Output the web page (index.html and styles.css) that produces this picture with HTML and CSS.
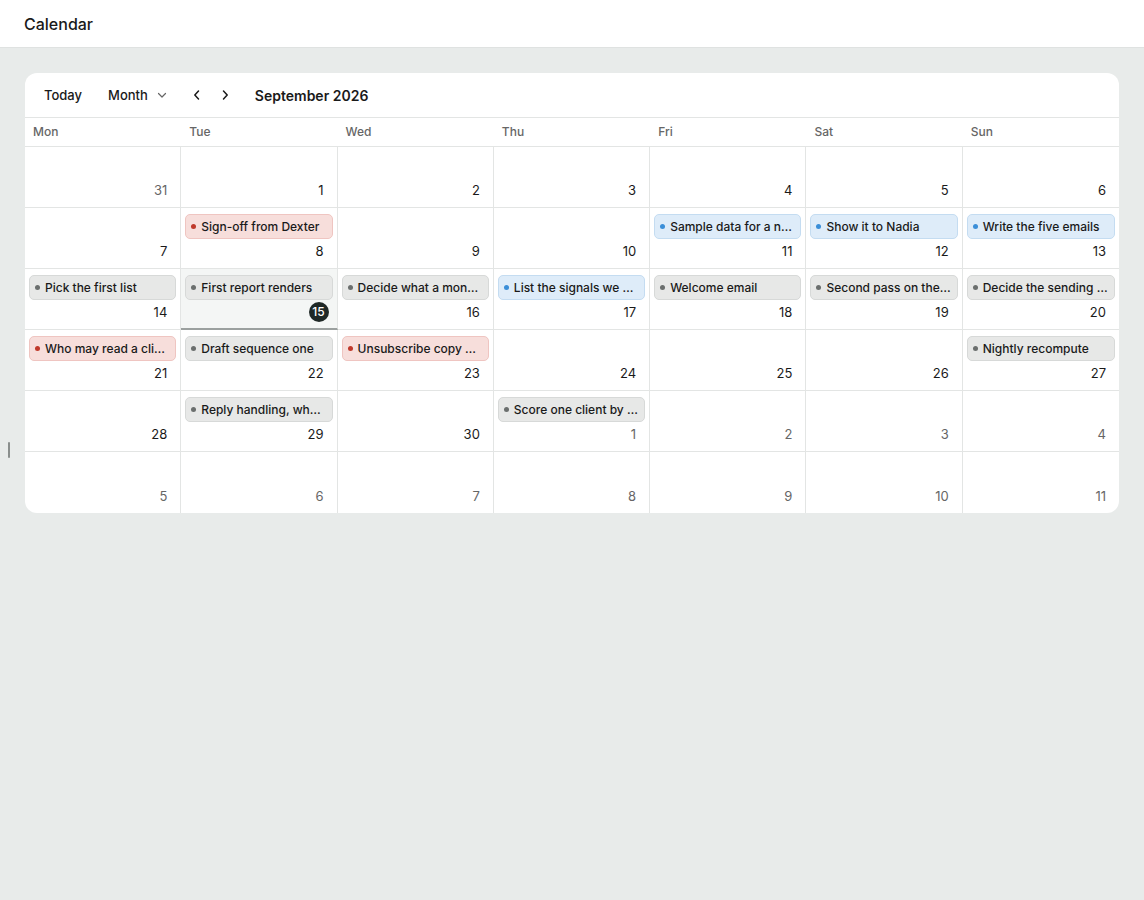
FILE: index.html
```html
<!DOCTYPE html>
<html lang="en">
<head>
    <meta charset="UTF-8">
    <meta name="viewport" content="width=device-width, initial-scale=1.0">
    <title>Calendar</title>
    <link rel="stylesheet" href="styles.css">
</head>
<body>
    <!-- Top bar -->
    <header class="topbar">Calendar</header>

    <main class="page">
        <div class="resize-handle"></div>

        <!-- Month view -->
        <section class="calendar">
            <div class="toolbar">
                <button class="tool-btn">Today</button>
                <button class="tool-btn view-btn">Month
                    <svg width="12" height="12" viewBox="0 0 12 12"><path d="M2.5 4.5 6 8l3.5-3.5" fill="none" stroke="#666" stroke-width="1.2" stroke-linecap="round" stroke-linejoin="round"/></svg>
                </button>
                <div class="nav">
                    <button class="nav-btn">
                        <svg width="14" height="14" viewBox="0 0 14 14"><path d="M8.5 3 4.8 7l3.7 4" fill="none" stroke="#1a1a1a" stroke-width="1.5" stroke-linecap="round" stroke-linejoin="round"/></svg>
                    </button>
                    <button class="nav-btn">
                        <svg width="14" height="14" viewBox="0 0 14 14"><path d="M5.5 3 9.2 7l-3.7 4" fill="none" stroke="#1a1a1a" stroke-width="1.5" stroke-linecap="round" stroke-linejoin="round"/></svg>
                    </button>
                </div>
                <div class="month-title">September 2026</div>
            </div>

            <div class="weekdays">
                <div>Mon</div><div>Tue</div><div>Wed</div><div>Thu</div><div>Fri</div><div>Sat</div><div>Sun</div>
            </div>

            <div class="grid">
                <!-- week 1 -->
                <div class="day other"><span class="num">31</span></div>
                <div class="day"><span class="num">1</span></div>
                <div class="day"><span class="num">2</span></div>
                <div class="day"><span class="num">3</span></div>
                <div class="day"><span class="num">4</span></div>
                <div class="day"><span class="num">5</span></div>
                <div class="day"><span class="num">6</span></div>

                <!-- week 2 -->
                <div class="day"><span class="num">7</span></div>
                <div class="day">
                    <div class="event red">Sign-off from Dexter</div>
                    <span class="num">8</span>
                </div>
                <div class="day"><span class="num">9</span></div>
                <div class="day"><span class="num">10</span></div>
                <div class="day">
                    <div class="event blue">Sample data for a new client</div>
                    <span class="num">11</span>
                </div>
                <div class="day">
                    <div class="event blue">Show it to Nadia</div>
                    <span class="num">12</span>
                </div>
                <div class="day">
                    <div class="event blue">Write the five emails</div>
                    <span class="num">13</span>
                </div>

                <!-- week 3 -->
                <div class="day">
                    <div class="event gray">Pick the first list</div>
                    <span class="num">14</span>
                </div>
                <div class="day today">
                    <div class="event gray">First report renders</div>
                    <span class="num">15</span>
                </div>
                <div class="day">
                    <div class="event gray">Decide what a month looks like</div>
                    <span class="num">16</span>
                </div>
                <div class="day">
                    <div class="event blue">List the signals we score</div>
                    <span class="num">17</span>
                </div>
                <div class="day">
                    <div class="event gray">Welcome email</div>
                    <span class="num">18</span>
                </div>
                <div class="day">
                    <div class="event gray">Second pass on the report</div>
                    <span class="num">19</span>
                </div>
                <div class="day">
                    <div class="event gray">Decide the sending schedule</div>
                    <span class="num">20</span>
                </div>

                <!-- week 4 -->
                <div class="day">
                    <div class="event red">Who may read a client's data</div>
                    <span class="num">21</span>
                </div>
                <div class="day">
                    <div class="event gray">Draft sequence one</div>
                    <span class="num">22</span>
                </div>
                <div class="day">
                    <div class="event red">Unsubscribe copy checked</div>
                    <span class="num">23</span>
                </div>
                <div class="day"><span class="num">24</span></div>
                <div class="day"><span class="num">25</span></div>
                <div class="day"><span class="num">26</span></div>
                <div class="day">
                    <div class="event gray">Nightly recompute</div>
                    <span class="num">27</span>
                </div>

                <!-- week 5 -->
                <div class="day"><span class="num">28</span></div>
                <div class="day">
                    <div class="event gray">Reply handling, who answers</div>
                    <span class="num">29</span>
                </div>
                <div class="day"><span class="num">30</span></div>
                <div class="day other">
                    <div class="event gray">Score one client by hand</div>
                    <span class="num">1</span>
                </div>
                <div class="day other"><span class="num">2</span></div>
                <div class="day other"><span class="num">3</span></div>
                <div class="day other"><span class="num">4</span></div>

                <!-- week 6 -->
                <div class="day other"><span class="num">5</span></div>
                <div class="day other"><span class="num">6</span></div>
                <div class="day other"><span class="num">7</span></div>
                <div class="day other"><span class="num">8</span></div>
                <div class="day other"><span class="num">9</span></div>
                <div class="day other"><span class="num">10</span></div>
                <div class="day other"><span class="num">11</span></div>
            </div>
        </section>
    </main>
</body>
</html>
```

FILE: styles.css
```css
/* Base */
* {
    box-sizing: border-box;
}
html, body {
    margin: 0;
    height: 100%;
}
body {
    font-family: Inter, "Noto Sans", sans-serif;
    color: #1a1a1a;
    background-color: #e8ebea;
    display: flex;
    flex-direction: column;
}
button {
    font-family: inherit;
    background: none;
    border: none;
    cursor: pointer;
    color: inherit;
    padding: 0;
}

/* Top bar */
.topbar {
    height: 48px;
    background-color: #fff;
    border-bottom: 1px solid #dfe2e1;
    padding: 0 24px;
    display: flex;
    align-items: center;
    font-size: 16px;
    font-weight: 500;
}

.page {
    flex: 1;
    padding: 25px;
    position: relative;
}
.resize-handle {
    position: absolute;
    left: 8px;
    top: 394px;
    width: 2px;
    height: 16px;
    background-color: #8a8e8d;
    border-radius: 1px;
}

/* Calendar card */
.calendar {
    background-color: #fff;
    border-radius: 12px;
    overflow: hidden;
}
.toolbar {
    height: 45px;
    border-bottom: 1px solid #e3e5e4;
    display: flex;
    align-items: center;
    padding: 0 8px;
}
.tool-btn {
    font-size: 13px;
    font-weight: 500;
    padding: 6px 11px;
    display: flex;
    align-items: center;
    gap: 8px;
}
.view-btn {
    margin-left: 4px;
}
.nav {
    display: flex;
    margin-left: 4px;
}
.nav-btn {
    width: 28px;
    height: 28px;
    display: flex;
    align-items: center;
    justify-content: center;
}
.month-title {
    margin-left: 16px;
    font-size: 14px;
    font-weight: 600;
}

.weekdays {
    display: grid;
    grid-template-columns: repeat(7, 1fr);
    height: 29px;
    border-bottom: 1px solid #e3e5e4;
}
.weekdays div {
    font-size: 12px;
    font-weight: 500;
    color: #666;
    padding: 0 8px;
    display: flex;
    align-items: center;
    padding-bottom: 1px;
}

.grid {
    display: grid;
    grid-template-columns: repeat(7, 1fr);
    grid-auto-rows: 61px;
}
.day {
    border-right: 1px solid #e3e5e4;
    border-bottom: 1px solid #e3e5e4;
    padding: 6px 4px 7px;
    display: flex;
    flex-direction: column;
    min-width: 0;
}
.day:nth-child(7n) {
    border-right: none;
}
.day:nth-last-child(-n+7) {
    border-bottom: none;
}
.num {
    margin-top: auto;
    align-self: flex-end;
    font-size: 13px;
    padding-right: 9px;
    line-height: 20px;
    height: 20px;
}
.day.other .num {
    color: #666;
}

/* Today */
.day.today {
    background-color: #f4f6f5;
    border-bottom: 2px solid #9ba09f;
    padding-bottom: 6px;
}
.day.today .num {
    width: 20px;
    height: 20px;
    border-radius: 50%;
    background-color: #1f2826;
    color: #fff;
    padding: 0;
    margin-right: 4px;
    text-align: center;
    font-size: 12px;
    font-weight: 500;
}

/* Event chips */
.event {
    height: 25px;
    border-radius: 5px;
    border: 1px solid;
    font-size: 12px;
    font-weight: 500;
    line-height: 23px;
    padding: 0 6px 0 15px;
    white-space: nowrap;
    overflow: hidden;
    text-overflow: ellipsis;
    position: relative;
}
.event::before {
    content: "";
    position: absolute;
    left: 5px;
    top: 9px;
    width: 5px;
    height: 5px;
    border-radius: 50%;
}
.event.gray {
    background-color: #e7e8e7;
    border-color: #d7d9d8;
}
.event.gray::before {
    background-color: #6b6f6e;
}
.event.red {
    background-color: #f7dedb;
    border-color: #efc5c1;
}
.event.red::before {
    background-color: #c0392b;
}
.event.blue {
    background-color: #deecf9;
    border-color: #c4dcf1;
}
.event.blue::before {
    background-color: #3b8fd8;
}
```
